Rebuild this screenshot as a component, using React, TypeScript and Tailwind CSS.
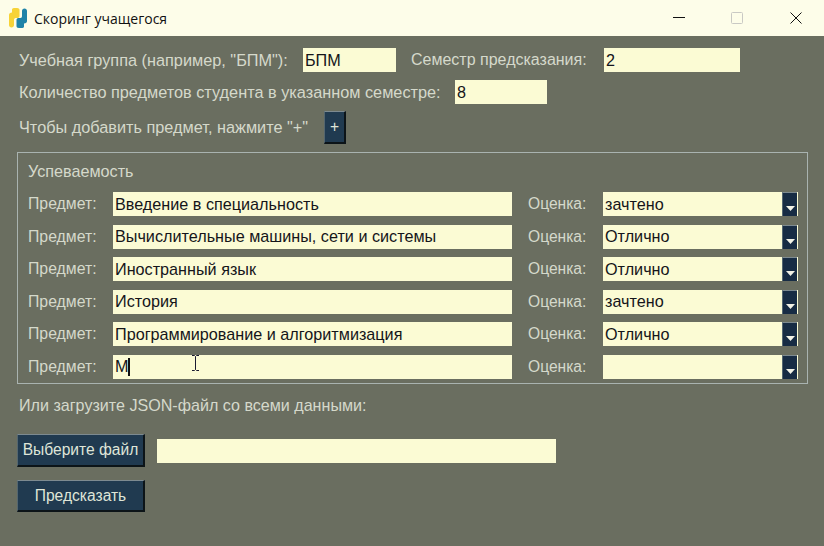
const subjects = [
  { name: "Введение в специальность", grade: "зачтено" },
  { name: "Вычислительные машины, сети и системы", grade: "Отлично" },
  { name: "Иностранный язык", grade: "Отлично" },
  { name: "История", grade: "зачтено" },
  { name: "Программирование и алгоритмизация", grade: "Отлично" },
  { name: "М", grade: "" },
];

function Field({ value, className, children }: { value?: string; className: string; children?: React.ReactNode }) {
  return (
    <div className={`relative flex h-6 items-center bg-[#fbfbd4] pl-[2px] text-[16.2px] text-[#15151a] ${className}`}>
      {value}
      {children}
    </div>
  );
}

function DarkButton({ label, className }: { label: string; className: string }) {
  return (
    <div className={`flex items-center justify-center border-t border-l border-t-[#7d8a90] border-l-[#54666f] border-r-2 border-b-2 border-r-[#0c1418] border-b-[#0c1418] bg-[#203a50] text-[15.6px] text-[#dfe5d8] ${className}`}>
      {label}
    </div>
  );
}

function GradeSelect({ value }: { value: string }) {
  return (
    <Field value={value} className="ml-[17px] w-[195px]">
      <div className="absolute top-0 right-[1px] flex h-6 w-[15px] items-end justify-center border-t border-l border-t-[#7d8a90] border-l-[#54666f] bg-[#172c44] pb-[5px]">
        <svg width="9" height="5" viewBox="0 0 9 5">
          <path d="M0 0h9L4.500 5z" fill="#f2f2e6" />
        </svg>
      </div>
    </Field>
  );
}

export default function App() {
  return (
    <div className="flex h-[546px] w-[824px] flex-col overflow-hidden bg-[#6a6e60] font-['Liberation_Sans',sans-serif] text-[16.2px] text-[#d5d9cb]">
      <div className="flex h-9 shrink-0 items-center bg-[#fdfde9] pl-[9px] text-[#111]">
        <svg width="18" height="20" viewBox="0 0 18 20">
          <path d="M3 1.500C3 .5 4 0 6 0h2c2 0 2.500 1 2.500 2v6c0 1.500-1 2-2.500 2H6.500C5.500 10 5 11 5 12v5c0 1.500-1 2.500-2.500 2.500S0 18.500 0 17V7c0-1.500 1-2.500 3-2.500z" fill="#f7d337" />
          <path d="M15 18.500c0 1-1 1.500-3 1.500h-2c-2 0-2.500-1-2.500-2v-6c0-1.500 1-2 2.500-2h1.500c1 0 1.500-1 1.500-2V3c0-1.500 1-2.500 2.500-2.500S18 1.500 18 3v10c0 1.500-1 2.500-3 2.500z" fill="#1f83a8" />
        </svg>
        <span className="ml-[7px] font-['Open_Sans',sans-serif] text-[14px]">Скоринг учащегося</span>
        <div className="ml-auto flex items-center pr-[22px]">
          <svg width="12" height="12" viewBox="0 0 12 12" className="mr-[46px]">
            <path d="M0 5.500h12" stroke="#111" strokeWidth="1" />
          </svg>
          <svg width="12" height="12" viewBox="0 0 12 12" className="mr-[47px]">
            <rect x=".5" y=".5" width="11" height="11" rx="1" fill="none" stroke="#c9c9c4" />
          </svg>
          <svg width="12" height="12" viewBox="0 0 12 12">
            <path d="M.5.500l11 11M11.500.500l-11 11" stroke="#111" strokeWidth="1" />
          </svg>
        </div>
      </div>

      <div className="flex flex-col pt-[12px] pl-[17px]">
        <div className="flex h-6 items-center pl-[2px]">
          <span className="w-[284px] text-[16.3px]">Учебная группа (например, "БПМ"):</span>
          <Field value="БПМ" className="w-[93px]" />
          <span className="ml-[15px] w-[193px] text-[16px]">Семестр предсказания:</span>
          <Field value="2" className="w-[136px]" />
        </div>
        <div className="mt-2 flex h-6 items-center pl-[2px]">
          <span className="w-[436px] text-[16.3px]">Количество предметов студента в указанном семестре:</span>
          <Field value="8" className="w-[92px]" />
        </div>
        <div className="mt-[7px] flex h-[33px] items-center pl-[2px]">
          <span className="w-[305px] text-[16.3px]">Чтобы добавить предмет, нажмите "+"</span>
          <DarkButton label="+" className="h-[33px] w-[22px]" />
        </div>

        <div className="mt-2 flex h-[232px] w-[791px] flex-col border border-[#a9b3b0] pl-[10px]">
          <span className="mt-[9px] h-[18px] leading-[18px]">Успеваемость</span>
          <div className="mt-[12px] flex flex-col gap-[8.500px]">
            {subjects.map((subject, i) => (
              <div key={i} className="flex h-6 items-center">
                <span className="w-[85px] text-[15.8px]">Предмет:</span>
                <Field value={subject.name} className="w-[399px]">
                  {subject.name === "М" && <span className="h-[18px] w-[2px] bg-[#111]" />}
                  {subject.name === "М" && (
                    <svg width="7" height="16" viewBox="0 0 7 16" className="absolute top-[0px] left-[79px]">
                      <path d="M0 .500h2.500L3.500 1.500 4.500.500H7M3.500 1.500v13M0 15.500h2.500l1-1 1 1H7" fill="none" stroke="#1a1a30" />
                    </svg>
                  )}
                </Field>
                <span className="ml-[16px] w-[58px] text-[15.6px]">Оценка:</span>
                <GradeSelect value={subject.grade} />
              </div>
            ))}
          </div>
        </div>

        <span className="mt-[12px] ml-[2px] h-[18px] text-[16.1px] leading-[18px]">Или загрузите JSON-файл со всеми данными:</span>
        <div className="mt-[20px] flex items-center">
          <DarkButton label="Выберите файл" className="h-[33px] w-[128px]" />
          <Field className="ml-3 w-[399px]" />
        </div>
        <DarkButton label="Предсказать" className="mt-[13px] h-[32px] w-[128px]" />
      </div>
    </div>
  );
}
